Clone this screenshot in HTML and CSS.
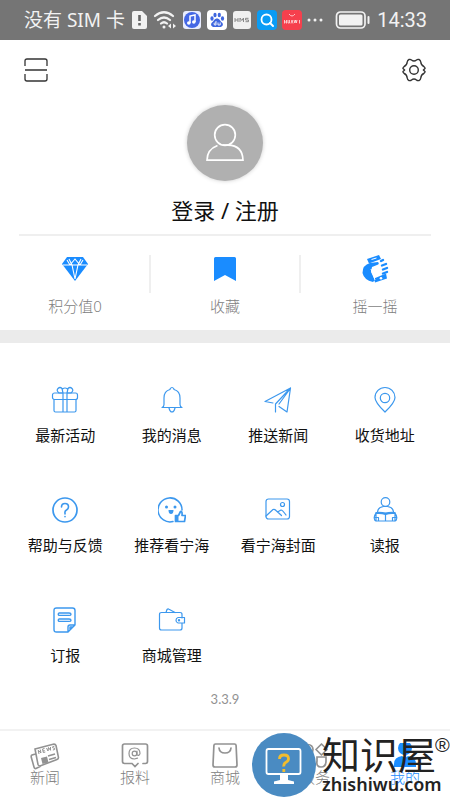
FILE: index.html
```html
<!DOCTYPE html>
<html lang="zh-CN">
<head>
<meta charset="utf-8">
<meta name="viewport" content="width=device-width, initial-scale=1">
<title>我的</title>
<link rel="stylesheet" href="styles.css">
</head>
<body>
<div class="app">
  <div class="status">
    <span class="carrier">没有 SIM 卡</span>
    <svg class="sim" width="16" height="20" viewBox="0 0 16 20"><path d="M2 1h8l5 5v11a2 2 0 0 1-2 2H2a2 2 0 0 1-2-2V3a2 2 0 0 1 2-2z" fill="#f2f2f2"/><path d="M7.500 5v6M7.500 13v2.500" stroke="#666" stroke-width="2.600"/></svg>
    <svg class="wifi" width="24" height="20" viewBox="0 0 24 20" fill="none" stroke="#f2f2f2" stroke-width="2.200" stroke-linecap="round"><path d="M2 6q9-7.500 18 0M5 10q6-5 12 0M8 13.500q3-2.500 6 0"/><circle cx="11" cy="17" r="1.500" fill="#f2f2f2" stroke="none"/><path d="m18 13.500-3 2.500 3 2.500zM20 13.500l3 2.500-3 2.500z" fill="#f2f2f2" stroke="none"/></svg>
    <svg class="chip" width="20" height="20" viewBox="0 0 20 20"><rect x="1" y="1" width="18" height="18" rx="3" fill="#e9edff"/><circle cx="10" cy="10" r="8" fill="#4467e5"/><path d="M8 13V6l5-1v7" fill="none" stroke="#fff" stroke-width="1.500"/><circle cx="6.800" cy="13" r="1.800" fill="#fff"/><circle cx="11.800" cy="12" r="1.800" fill="#fff"/></svg>
    <svg class="chip" width="20" height="20" viewBox="0 0 20 20"><rect width="20" height="20" rx="4" fill="#fff"/><g fill="#3f66df"><ellipse cx="5" cy="8.500" rx="1.600" ry="2.200"/><ellipse cx="8" cy="5" rx="1.600" ry="2.200"/><ellipse cx="12.300" cy="5" rx="1.600" ry="2.200"/><ellipse cx="15.500" cy="8.500" rx="1.600" ry="2.200"/><path d="M10 8.500c2.500 0 3 2.500 5 4 2 2 .5 4.500-2 4.500H7c-2.500 0-4-2.500-2-4.500 2-1.500 2.500-4 5-4z"/></g><path d="M9 11v4H7.500q-1-1.500 0-2H9M11 12.500V15h2.200v-2.500" fill="none" stroke="#fff" stroke-width=".9"/></svg>
    <svg class="chip" width="20" height="20" viewBox="0 0 20 20"><rect x="1" y="1" width="18" height="18" rx="3" fill="#f0f0f0"/><path d="M3 8v4M6 8v4M3 10h3M8 12V8l1.800 2.500L11.500 8v4M16.500 8.300h-3V10h3v1.700h-3" fill="none" stroke="#888" stroke-width="1"/></svg>
    <svg class="chip" width="20" height="20" viewBox="0 0 20 20"><rect width="20" height="20" rx="4" fill="#0a9cf5"/><circle cx="9.500" cy="9.500" r="5" fill="none" stroke="#fff" stroke-width="1.800"/><path d="m13 13 3 3" stroke="#fff" stroke-width="2" stroke-linecap="round"/></svg>
    <svg class="chip" width="20" height="20" viewBox="0 0 20 20"><rect width="20" height="20" rx="4" fill="#f6404d"/><path d="M7 4q3 4 6 0" fill="none" stroke="#ffc5c8"/><path d="M2.500 10v3.500M4.500 10v3.500M2.500 12h2M6 10v3h1.500v-3M9 13.500l1-3.500 1 3.500M12 10l.8 3 .8-3 .7 3 .7-3M17.500 10v3.500" fill="none" stroke="#ffe4e4" stroke-width=".8"/></svg>
    <svg class="more" width="16" height="20" viewBox="0 0 16 20" fill="#f2f2f2"><circle cx="2" cy="10" r="1.500"/><circle cx="8" cy="10" r="1.500"/><circle cx="14" cy="10" r="1.500"/></svg>
    <svg class="battery" width="36" height="20" viewBox="0 0 36 20"><rect x="1.500" y="2" width="28.500" height="16" rx="4" fill="none" stroke="#f2f2f2" stroke-width="1.700"/><rect x="4" y="4.500" width="23.500" height="11" rx="1.500" fill="#f2f2f2"/><path d="M33.500 7v6" stroke="#f2f2f2" stroke-width="2" stroke-linecap="round"/></svg>
    <time class="clock">14:33</time>
  </div>

  <header class="topbar">
    <button class="icon-btn" type="button" aria-label="扫一扫"><svg width="24" height="24" viewBox="0 0 24 24" fill="none" stroke="#333" stroke-width="1.300"><path d="M1 8V3q0-2 2-2h18q2 0 2 2v5M1 16v5q0 2 2 2h18q2 0 2-2v-5M1 12h22"/></svg></button>
    <button class="icon-btn" type="button" aria-label="设置"><svg width="24" height="24" viewBox="0 0 24 24" fill="none" stroke="#333" stroke-width="1.400" stroke-linejoin="round"><path d="M7 1.500Q8.500 1 9.500 2q2.500 2 5 0 1-1 2.500-.5 1.500.6 1.800 2.500.2 3.200 3 4.500 1.500 1.300 1.200 2l-1.600 1.500 1.600 1.500q.3.700-1.200 2-2.800 1.300-3 4.500-.3 1.900-1.800 2.500-1.500.5-2.500-.5-2.500-2-5 0-1 1-2.500.5-1.500-.6-1.800-2.500-.2-3.200-3-4.500Q.7 14.200 1 13.500L2.600 12 1 10.500q-.3-.7 1.200-2 2.800-1.300 3-4.500Q5.500 2.100 7 1.500z"/><circle cx="12" cy="12" r="4.300"/></svg></button>
  </header>

  <section class="profile">
    <button class="login" type="button">
      <span class="avatar"><svg width="40" height="40" viewBox="0 0 40 40" fill="none" stroke="#fff" stroke-width="1.700"><circle cx="20" cy="12" r="10.300"/><path d="M12.500 22.500Q2 26.500 2 37.200h36Q37.500 22.500 23 22.200h-5"/></svg></span>
      <span class="login-text">登录 / 注册</span>
    </button>
    <div class="stats">
      <button class="stat" type="button"><svg width="28" height="28" viewBox="0 0 28 28"><path d="M6 2h16l5 7-13 17L1 9z" fill="#1a8cff"/><path d="M2 10h24M8 4l3 6 3 14 3-14 3-6M9 10l5-6 5 6M6 5l3 5M22 5l-3 5" fill="none" stroke="#fff" stroke-width="1.100"/></svg><span>积分值0</span></button>
      <button class="stat" type="button"><svg width="28" height="28" viewBox="0 0 28 28"><path d="M4.500 2h19a1.500 1.500 0 0 1 1.500 1.500V26l-11-6-11 6V3.500A1.500 1.500 0 0 1 4.500 2z" fill="#1a8cff"/></svg><span>收藏</span></button>
      <button class="stat" type="button"><svg width="28" height="28" viewBox="0 0 28 28" fill="#1a8cff"><path d="m6 4 12-4 2 4-12 4.500z"/><path d="M9 8 17 7q2 2-1 3l-5 2-1 5 4 8-2 2Q3 25 1.500 18q0-8 7.500-10z"/><path d="m13 23.500 12-5 1 5-12 4z"/><path d="m20 6 2-1M21 10.500l4-1.500M22 14.500l4-1.500M22 18.500l4-1.500" stroke="#1a8cff" stroke-width="2.400" stroke-linecap="round"/><path d="m10 14 4 11M10.500 4.500l5-1.500" stroke="#fff" fill="none"/><circle cx="20" cy="23.300" r="1.300" fill="#fff"/></svg><span>摇一摇</span></button>
    </div>
  </section>

  <main class="menu">
    <div class="grid">
      <button class="item" type="button"><svg viewBox="0 0 28 28"><rect x="1.500" y="7" width="25" height="6.500" rx="2"/><path d="M3 13.500v11q0 1.500 1.500 1.500h19q1.500 0 1.500-1.500v-11M12 7v19M16 7v19M12 7H8Q5 4.500 7 2.500q2-2 4 0l1 4.500zM16 7h4q3-2.500 1-4.500-2-2-4 0L16 7M11.500 3q2.500-2 5 0"/></svg><span>最新活动</span></button>
      <button class="item" type="button"><svg viewBox="0 0 28 28"><path d="M4 21.500q2-.5 2-3V12q0-7 6-8.500V3q2-3 4 0v.5q6 1.500 6 8.500v6.500q0 2.500 2 3zM11 22q1 4 3 4t3-4"/></svg><span>我的消息</span></button>
      <button class="item" type="button"><svg viewBox="0 0 28 28"><path d="M9 17 1 15.500 26.500 2l-3.500 24-8-5.500M26.500 2 11.500 18v8M26 3 15 18"/></svg><span>推送新闻</span></button>
      <button class="item" type="button"><svg viewBox="0 0 28 28"><path d="M14 26Q4 16.500 4 11.500a10 10 0 0 1 20 0Q24 16.500 14 26z"/><circle cx="14" cy="12" r="4.700"/></svg><span>收货地址</span></button>
      <button class="item" type="button"><svg viewBox="0 0 28 28"><circle cx="14" cy="14" r="12" stroke-width="1.700"/><path d="M10.500 11q0-3.500 3.500-3.500t3.500 3.300q0 2-2 3.200T14 17v1M14 20.500v.2" stroke-width="1.600"/></svg><span>帮助与反馈</span></button>
      <button class="item" type="button"><svg viewBox="0 0 28 28"><path d="M15 25.500A12 12 0 1 1 24 14" stroke-width="1.500"/><g class="solid"><circle cx="8.500" cy="11" r="1.500"/><circle cx="17" cy="11" r="1.500"/><path d="M10.500 14h5q0 4-2.500 4t-2.500-4zM17 19.500h3.500v6H17z"/></g><path d="M17.500 19.500h3l2-4q2-.5 1.500 4h3.500l-1 6h-9z" stroke-width="1.700"/></svg><span>推荐看宁海</span></button>
      <button class="item" type="button"><svg viewBox="0 0 28 28"><rect x="2" y="3" width="23.500" height="20" rx="2.500"/><circle cx="18.500" cy="8.500" r="2"/><path d="m2 20 7-6.500q1.500-.7 3 1l5.500 5M13.500 16l3.500-2q1.500 0 5 5"/></svg><span>看宁海封面</span></button>
      <button class="item" type="button"><svg viewBox="0 0 28 28"><circle cx="14.500" cy="6" r="4.300"/><path d="M6.500 16q.5-5 6-5.500h4q5.500.5 6 5.500M5 17h19v8H5zM14.500 17.500V25M5 17q-3 4-1 7.500l1 .5M24 17q3 4 1 7.500l-1 .5M4 21.500h3.500V25M25 21.500h-3.500V25"/><path d="M5.500 17q5-.5 9 1 4-1.500 9-1" stroke-width="2.200"/></svg><span>读报</span></button>
      <button class="item" type="button"><svg viewBox="0 0 28 28"><path d="M5.500 2h16q2.500 0 2.500 2.500V19l-7 7H5.500Q3 26 3 23.500v-19Q3 2 5.500 2zM17 25.500V21q0-2 2-2h5M19 24v-3h3M8 7h10q2 0 2 1.200t-2 1.200H8q-1.500-1.200 0-2.400zM8 13h10q2 0 2 1.200t-2 1.200H8q-1.500-1.200 0-2.400z" stroke-width="1.400"/></svg><span>订报</span></button>
      <button class="item" type="button"><svg viewBox="0 0 28 28"><path d="M24 12V8.500q0-2-2-2H3.500q-2 0-2 2V22q0 2 2 2H22q2 0 2-2v-5M8 6.500l1-3q1-1 2-.3l6 3.300M20 11.500h6.500v5.500H20q-2-.5-2-2.700t2-2.800z"/><circle cx="21" cy="14.300" r=".6"/></svg><span>商城管理</span></button>
    </div>
    <p class="version">3.3.9</p>
  </main>

  <nav class="tabs">
    <a class="tab" href="#news"><svg width="30" height="28" viewBox="0 0 30 28" fill="none" stroke="#929292" stroke-width="1.600"><path d="m5 6 19-5q1.500 0 2 1.500l2.500 12q0 1.500-1.500 2L10 23q-1.500 0-2-1.500zM5.500 11 2 12q-1 .5-.8 2L4 24q.5 2 2 1.500l5-2.500M18 13l7-2M19 16.500l7-2"/><path d="m11 15 6-1.500 1.500 6-6 1.500z" fill="#929292" stroke="none"/><path d="m9 11-.8-3.700L11 10l-.8-3.500M14.500 5.500l-2 .5.800 3.500 2-.5M13 8l1.700-.4M16.500 5l1.500 3 .5-3.500 2 2.800V4M24.500 3l-2 .8q0 1.400 1 1.200 1.500-.3 1.200 1.500l-1.800.5" stroke-width="1"/></svg><span>新闻</span></a>
    <a class="tab" href="#report"><svg width="30" height="28" viewBox="0 0 30 28" fill="none" stroke="#929292" stroke-width="1.700" stroke-linecap="round"><path d="M23 20.500h2.500q2 0 2-2V3q0-2-2-2h-21q-2 0-2 2v15.500q0 2 2 2H12l3 3 3-3"/><circle cx="14.500" cy="10.500" r="2.300" stroke-width="1.200"/><path d="M17 8v4q2.500 1 3-1.500Q20 5 14.500 5T9 10.500Q9 16 14.500 16l3-.8" stroke-width="1.200"/></svg><span>报料</span></a>
    <a class="tab" href="#mall"><svg width="30" height="28" viewBox="0 0 30 28" fill="none" stroke="#929292" stroke-width="1.700" stroke-linecap="round"><path d="M5.500 1h19q1.500 0 1.600 1.500L27 22q0 2-2 2H5q-2 0-2-2l.9-19.500Q4 1 5.500 1zM9 5q.5 5 6 5t6-5"/></svg><span>商城</span></a>
    <a class="tab" href="#service"><svg width="30" height="28" viewBox="0 0 30 28" fill="none" stroke="#929292" stroke-width="1.700"><circle cx="8" cy="6.500" r="5"/><path d="M21.500 1 27 6.500 21.500 12 16 6.500z" stroke-linejoin="round"/><rect x="3" y="14" width="10" height="10" rx="3"/><path d="M17 14h9v4q0 6-5 6t-4-6z"/></svg><span>服务</span></a>
    <a class="tab active" href="#me" aria-current="page"><svg width="30" height="28" viewBox="0 0 30 28" fill="#1a8cff"><circle cx="15" cy="5" r="7"/><path d="M4 24v-3q0-7 8-8l3 2 3-2q8 1 8 8v3z"/></svg><span>我的</span></a>
  </nav>

  <div class="watermark">
    <svg class="wm-logo" width="64" height="64" viewBox="0 0 64 64"><circle cx="32" cy="32" r="32" fill="#4a8bc2"/><rect x="14.500" y="16" width="34" height="25" rx="2" fill="none" stroke="#fff" stroke-width="1.800"/><path d="M28 41h8v6l6 1.500V51H22v-2.500l6-1.500z" fill="#fff"/><path d="M27.500 26q0-4 4.500-4t4.500 3.800q0 2.200-2.500 3.500t-2.200 4.200M31.800 36v3" fill="none" stroke="#f2bd2e" stroke-width="2.800"/></svg>
    <div class="wm-text">
      <span class="wm-name">知识屋</span>
      <span class="wm-url">zhishiwu.com</span>
    </div>
    <span class="wm-reg">®</span>
  </div>
</div>
</body>
</html>
```
FILE: styles.css
```css
* {
  box-sizing: border-box;
}

body {
  margin: 0;
  background: #fff;
  color: #111;
  font-family: "Noto Sans", "Noto Sans CJK SC", sans-serif;
  font-size: 15px;
  line-height: 20px;
}

button {
  margin: 0;
  padding: 0;
  border: 0;
  background: none;
  color: inherit;
  font: inherit;
}

svg {
  display: block;
  flex: none;
}

.app {
  position: relative;
  display: flex;
  flex-direction: column;
  min-height: 100vh;
  overflow: hidden;
}

.status {
  display: flex;
  align-items: center;
  height: 40px;
  padding: 0 23px 0 24px;
  background: #757575;
  color: #f2f2f2;
  white-space: nowrap;
}

.carrier {
  font-size: 19px;
  margin-right: auto;
}

.wifi {
  margin-left: 5px;
}

.chip,
.more {
  margin-left: 5px;
}

.battery {
  margin-left: 12px;
}

.clock {
  margin-left: 6px;
  font-family: Roboto, sans-serif;
  font-size: 20px;
}

.topbar {
  display: flex;
  justify-content: space-between;
  padding: 18px 24px 0;
}

.icon-btn {
  width: 24px;
  height: 24px;
}

.profile {
  padding: 23px 19px 0;
  border-bottom: 13px solid #ebebeb;
}

.login {
  display: flex;
  flex-direction: column;
  align-items: center;
  gap: 14px;
  width: 100%;
  padding-bottom: 9px;
  border-bottom: 2px solid #efefef;
}

.avatar {
  display: grid;
  place-items: center;
  width: 76px;
  height: 76px;
  border-radius: 50%;
  background: #b0b0b0;
  box-shadow: 0 0 4px #ccc;
}

.login-text {
  font-size: 22px;
  line-height: 30px;
}

.stats {
  display: grid;
  grid-template-columns: repeat(3, 1fr);
  margin: 0 -19px;
  padding: 19px 0 14px;
}

.stat {
  position: relative;
  display: flex;
  flex-direction: column;
  align-items: center;
  gap: 13px;
  color: #808080;
  font-weight: 300;
}

.stat + .stat::before {
  content: "";
  position: absolute;
  left: -1px;
  top: 0;
  width: 2px;
  height: 38px;
  background: #efefef;
}

.menu {
  flex: 1;
  padding: 43px 12px 20px;
}

.grid {
  display: grid;
  grid-template-columns: repeat(4, 1fr);
  row-gap: 51px;
}

.item {
  display: flex;
  flex-direction: column;
  align-items: center;
  gap: 11px;
}

.item svg {
  width: 28px;
  height: 28px;
  fill: none;
  stroke: #3c98ee;
  stroke-width: 1.2;
  stroke-linecap: round;
  stroke-linejoin: round;
}

.item .solid {
  fill: #3c98ee;
  stroke: none;
}

.version {
  margin: 24px 0 0;
  color: #929292;
  font-family: Lato, sans-serif;
  font-size: 13px;
  text-align: center;
}

.tabs {
  display: grid;
  grid-template-columns: repeat(5, 1fr);
  height: 72px;
  padding-top: 12px;
  border-top: 2px solid #f2f2f2;
}

.tab {
  display: flex;
  flex-direction: column;
  align-items: center;
  color: #808080;
  font-weight: 300;
  line-height: 12px;
  text-decoration: none;
}

.tab.active {
  color: #1a8cff;
}

.watermark {
  position: absolute;
  right: 0;
  bottom: 4px;
  display: flex;
  align-items: flex-start;
  color: #222;
  white-space: nowrap;
}

.wm-text {
  display: flex;
  flex-direction: column;
  margin-left: 6px;
  width: 113px;
}

.wm-name {
  font-size: 38px;
  line-height: 42px;
}

.wm-url {
  font-size: 18px;
  font-weight: 600;
  line-height: 18px;
}

.wm-reg {
  width: 15px;
  font-family: "Liberation Sans", sans-serif;
  font-size: 20px;
  line-height: 24px;
}
```
